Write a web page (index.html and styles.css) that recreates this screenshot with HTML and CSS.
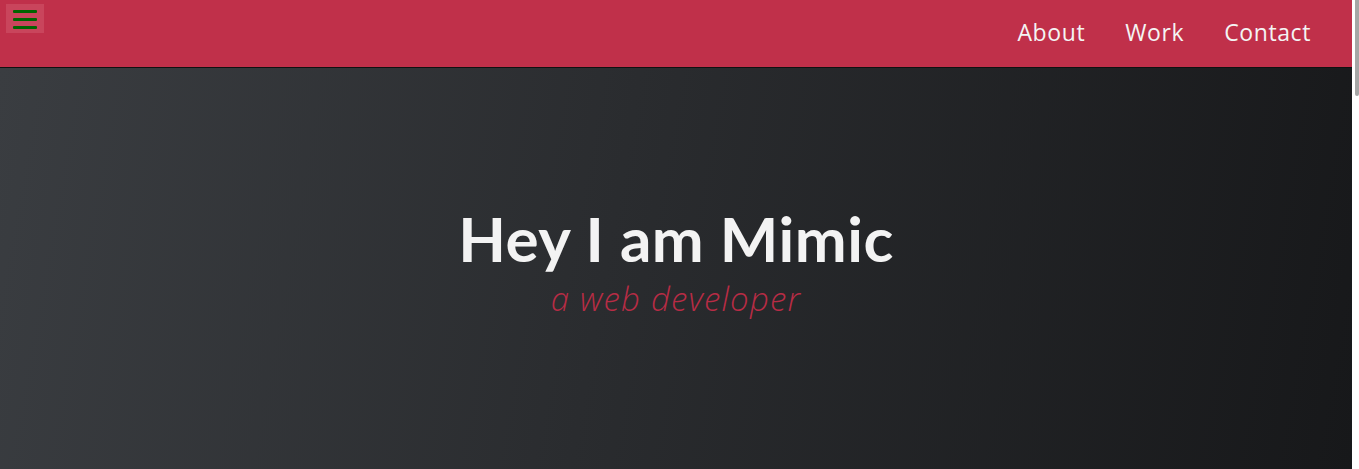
FILE: index.html
```html
<!DOCTYPE html>
<html lang="en">
<head>
<meta charset="utf-8">
<title>Mimic</title>
<link rel="stylesheet" href="styles.css">
</head>
<body>
<div class="page">
  <header class="topbar">
    <button class="menu-btn" aria-label="menu">
      <span class="bar"></span><span class="bar"></span><span class="bar"></span>
    </button>
    <nav class="nav">
      <a href="#about">About</a>
      <a href="#work">Work</a>
      <a href="#contact">Contact</a>
    </nav>
  </header>
  <main>
    <section class="hero">
      <h1 class="hero-title">Hey I am Mimic</h1>
      <p class="hero-sub">a web developer</p>
    </section>
  </main>
</div>
<div class="scrollbar" aria-hidden="true"><div class="scroll-thumb"></div></div>
</body>
</html>
```
FILE: styles.css
```css
* { box-sizing: border-box; }
html, body { height: 100%; overflow: hidden; }
body {
  margin: 0;
  font-family: "Open Sans", sans-serif;
  background: #1e1f21;
  display: flex;
}
.page {
  flex: 1;
  min-width: 0;
}
.scrollbar {
  position: fixed;
  top: 0;
  right: 0;
  width: 7px;
  height: 100%;
  background: #ffffff;
  display: flex;
  justify-content: flex-end;
}
.scroll-thumb {
  width: 4px;
  height: 96px;
  background: #a6a6a6;
  border-radius: 0 0 2px 2px;
}
.topbar {
  height: 68px;
  margin-right: 7px;
  background: #c0304a;
  border-bottom: 1px solid #111;
  display: flex;
  justify-content: space-between;
  align-items: flex-start;
}
.menu-btn {
  margin: 4px 0 0 6px;
  width: 38px;
  height: 29px;
  padding: 6px 7px 0;
  background: #c9455c;
  border: none;
  display: flex;
  flex-direction: column;
  gap: 5px;
}
.bar {
  display: block;
  width: 24px;
  height: 3px;
  background: #006400;
  border-radius: 1px;
}
.nav {
  display: flex;
  padding: 16px 21px 0 0;
}
.nav a {
  color: #f4f4f4;
  text-decoration: none;
  font-family: "Open Sans", sans-serif;
  font-size: 23px;
  letter-spacing: 0.6px;
  padding: 0 20px;
  line-height: 32px;
}
.hero {
  height: 401px;
  margin-right: 7px;
  background: linear-gradient(100deg, #3a3d41 0%, #2a2c2f 45%, #17181a 100%);
  display: flex;
  flex-direction: column;
  align-items: center;
  padding-top: 135px;
}
.hero-title {
  margin: 0;
  color: #f3f3f3;
  font-family: "Lato", sans-serif;
  font-weight: 700;
  font-size: 62px;
  line-height: 70px;
  letter-spacing: 0.5px;
}
.hero-sub {
  margin: 4px 0 0;
  color: #b72c45;
  font-family: "Open Sans", sans-serif;
  font-weight: 300;
  font-style: italic;
  font-size: 33px;
  letter-spacing: 1.2px;
  line-height: 44px;
}
```
